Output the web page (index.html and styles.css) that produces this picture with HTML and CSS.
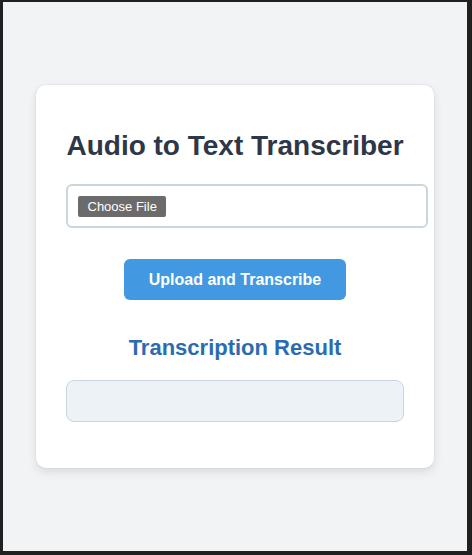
FILE: index.html
```html
<!DOCTYPE html>
<html lang="en">
<head>
<meta charset="utf-8">
<title>Audio to Text Transcriber</title>
<link rel="stylesheet" href="styles.css">
</head>
<body>
<div class="frame">
  <div class="page">
    <main class="card">
      <h1 class="title">Audio to Text Transcriber</h1>
      <label class="file-input">
        <span class="file-btn">Choose File</span>
      </label>
      <button class="upload-btn" type="button">Upload and Transcribe</button>
      <h2 class="result-title">Transcription Result</h2>
      <div class="result-box"></div>
    </main>
  </div>
</div>
</body>
</html>
```

FILE: styles.css
```css
* { box-sizing: border-box; }
html, body { margin: 0; padding: 0; }
body {
  font-family: "Liberation Sans", Arial, sans-serif;
  background: #202020;
}
.frame {
  width: 472px;
  height: 555px;
  border-style: solid;
  border-color: #202020;
  border-width: 2px 5px 4px 3px;
}
.page {
  width: 100%;
  height: 100%;
  background: #f2f3f5;
  display: flex;
  align-items: center;
  justify-content: center;
}
.card {
  width: 398px;
  height: 383px;
  background: #ffffff;
  border-radius: 10px;
  box-shadow: 0 4px 10px rgba(0, 0, 0, 0.1), 0 0 0 1px rgba(226, 232, 240, 0.6);
  padding: 45px 30px 30px;
  display: flex;
  flex-direction: column;
  align-items: stretch;
}
.title {
  margin: 0;
  font-size: 28px;
  font-weight: bold;
  color: #2d3748;
  text-align: center;
  white-space: nowrap;
  line-height: normal;
}
.file-input {
  box-sizing: content-box;
  width: 100%;
  margin-top: 22px;
  padding: 10px;
  border: 2px solid #cbd5e0;
  border-radius: 6px;
  height: 20px;
  display: flex;
  align-items: center;
}
.file-btn {
  display: inline-block;
  background: #6b6b6b;
  color: #ffffff;
  font-size: 13px;
  line-height: 21px;
  height: 21px;
  margin-top: 1px;
  padding: 0 9.5px;
  border-radius: 2px;
}
.upload-btn {
  align-self: center;
  margin-top: 31px;
  background: #4299e1;
  color: #ffffff;
  border: none;
  border-radius: 6px;
  font-family: "Liberation Sans", Arial, sans-serif;
  font-size: 16px;
  font-weight: bold;
  line-height: 17px;
  height: 41px;
  padding: 0 25px;
}
.result-title {
  margin: 35px 0 0;
  font-size: 22px;
  font-weight: bold;
  color: #2b6cb0;
  text-align: center;
  line-height: normal;
}
.result-box {
  margin-top: 19px;
  height: 42px;
  background: #edf2f7;
  border: 1px solid #cbd5e0;
  border-radius: 8px;
}
```
